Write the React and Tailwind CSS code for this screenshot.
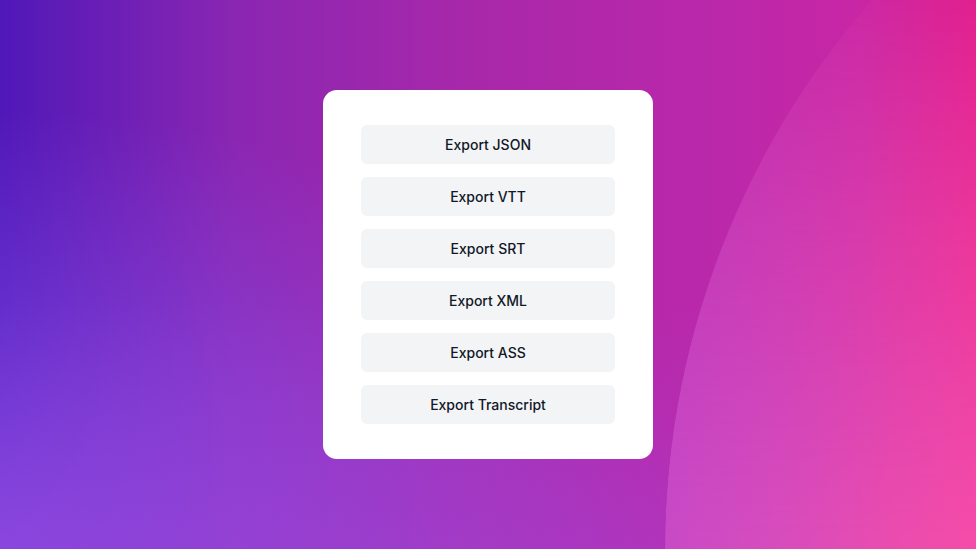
import React from "react";

const formats = ["JSON", "VTT", "SRT", "XML", "ASS", "Transcript"];

export default function App() {
  return (
    <div
      className="relative flex h-[549px] w-full items-center justify-center overflow-hidden bg-[linear-gradient(90deg,#5018b8_0%,#8a26b2_24%,#a828aa_48%,#bc28aa_75%,#c826a4_88%,#e01c8c_100%)]"
      style={{ fontFamily: "Inter, 'Noto Sans', sans-serif" }}
    >
      {/* lighter violet wash rising from the bottom-left */}
      <div className="pointer-events-none absolute inset-0 bg-[radial-gradient(ellipse_90%_100%_at_0%_100%,rgba(135,85,240,0.75)_0%,rgba(135,85,240,0.35)_45%,rgba(135,85,240,0)_80%)]" />
      <div className="pointer-events-none absolute inset-0 bg-[linear-gradient(0deg,rgba(170,70,215,0.35)_0%,rgba(170,70,215,0)_45%)]" />

      {/* big soft disc curving in from the right */}
      <div className="pointer-events-none absolute left-[665px] top-[-285px] h-[1670px] w-[1670px] rounded-full bg-[linear-gradient(90deg,#c84ac6_0px,#d84cbc_120px,#ea4cae_230px,#f64ca8_320px)] [mask-image:linear-gradient(180deg,transparent_240px,rgba(0,0,0,0.55)_520px,black_820px)]" />

      <div className="relative flex w-[330px] flex-col gap-[13px] rounded-[14px] bg-white px-[38px] py-[35px]">
        {formats.map((f) => (
          <button
            key={f}
            className="flex h-[39px] items-center justify-center rounded-md bg-[#f3f4f6] text-sm font-medium text-[#111827]"
          >
            Export {f}
          </button>
        ))}
      </div>
    </div>
  );
}
